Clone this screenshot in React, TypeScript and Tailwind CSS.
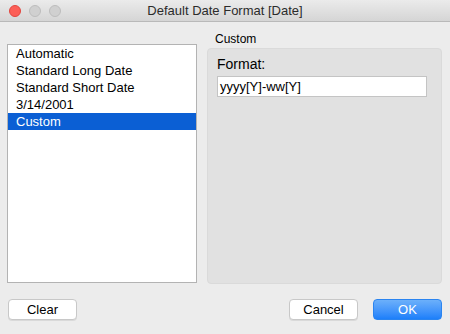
import React from "react";

const font = { fontFamily: '"Liberation Sans", Arial, sans-serif' };

export default function App() {
  const items = ["Automatic", "Standard Long Date", "Standard Short Date", "3/14/2001", "Custom"];
  return (
    <div className="w-[450px] h-[334px] bg-[#ececec] flex flex-col text-[13px] text-black overflow-hidden" style={font}>
      {/* title bar */}
      <div className="relative h-[22px] shrink-0 bg-gradient-to-b from-[#ebebeb] to-[#d5d5d5] border-b border-[#b9b9b9] flex items-center justify-center">
        <div className="absolute left-[9px] top-[5px] flex gap-[8px]">
          <div className="w-[12px] h-[12px] rounded-full bg-[#fc5f57] border border-[#e2463f]" />
          <div className="w-[12px] h-[12px] rounded-full bg-[#d0d0d0] border border-[#bdbdbd]" />
          <div className="w-[12px] h-[12px] rounded-full bg-[#d0d0d0] border border-[#bdbdbd]" />
        </div>
        <span className="text-[13px] text-[#2b2b2b] leading-none">Default Date Format [Date]</span>
      </div>

      {/* body */}
      <div className="flex px-[7px] pt-[22px] gap-[10px]">
        <div className="w-[190px] h-[239px] bg-white border border-[#b3b3b3] flex flex-col">
          {items.map((it) => (
            <div
              key={it}
              className={
                "h-[17px] flex items-center pl-[8px] leading-none " +
                (it === "Custom" ? "bg-[#0b5fd4] text-white" : "")
              }
            >
              {it}
            </div>
          ))}
        </div>
        <div className="flex flex-col w-[235px] -mt-[12px]">
          <div className="pl-[8px] h-[15px] leading-[15px] text-[12px]">Custom</div>
          <div className="mt-[1px] h-[236px] rounded-[4px] bg-[#e1e1e1] border border-[#dadada] px-[9px] pt-[7px]">
            <div className="text-[14px] leading-[16px]">Format:</div>
            <div className="mt-[4px] w-[210px] h-[21px] bg-white border border-[#c4c4c4] flex items-center pl-[2px] text-[13px]">
              yyyy[Y]-ww[Y]
            </div>
          </div>
        </div>
      </div>

      {/* buttons */}
      <div className="flex items-center px-[8px] pt-[15px]">
        <button className="w-[69px] h-[21px] rounded-[4px] bg-white border border-[#c8c8c8] shadow-[0_1px_0_rgba(0,0,0,0.08)] text-[13px] leading-none" style={font}>
          Clear
        </button>
        <div className="flex-1" />
        <button className="w-[69px] h-[21px] rounded-[4px] bg-white border border-[#c8c8c8] shadow-[0_1px_0_rgba(0,0,0,0.08)] text-[13px] leading-none" style={font}>
          Cancel
        </button>
        <button className="ml-[15px] w-[69px] h-[21px] rounded-[4px] bg-gradient-to-b from-[#6cb0fa] to-[#1b7ffa] border border-[#2a84f0] text-white text-[13px] leading-none" style={font}>
          OK
        </button>
      </div>
    </div>
  );
}
